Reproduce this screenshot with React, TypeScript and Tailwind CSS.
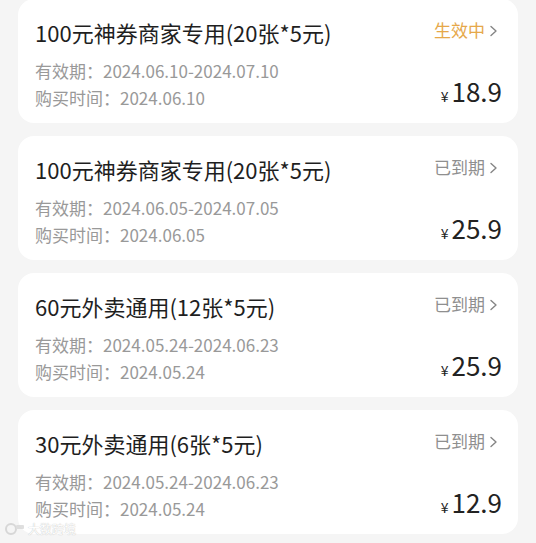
import React from 'react';

interface Coupon {
  id: number;
  title: string;
  status: string;
  active: boolean;
  validity: string;
  bought: string;
  price: string;
}

const coupons: Coupon[] = [
  { id: 1, title: '100元神券商家专用(20张*5元)', status: '生效中', active: true, validity: '2024.06.10-2024.07.10', bought: '2024.06.10', price: '18.9' },
  { id: 2, title: '100元神券商家专用(20张*5元)', status: '已到期', active: false, validity: '2024.06.05-2024.07.05', bought: '2024.06.05', price: '25.9' },
  { id: 3, title: '60元外卖通用(12张*5元)', status: '已到期', active: false, validity: '2024.05.24-2024.06.23', bought: '2024.05.24', price: '25.9' },
  { id: 4, title: '30元外卖通用(6张*5元)', status: '已到期', active: false, validity: '2024.05.24-2024.06.23', bought: '2024.05.24', price: '12.9' },
];

const font = { fontFamily: '"Noto Sans CJK SC", "Noto Sans", sans-serif' };

function CouponCard({ coupon }: { coupon: Coupon }) {
  return (
    <div className="flex h-[124px] w-[500px] shrink-0 rounded-[16px] bg-white pl-[17px] pr-[16px]">
      {/* left: title + dates */}
      <div className="flex flex-1 flex-col pt-[18px]">
        <div className="text-[22px] leading-[30px] text-[#1f1f1f] whitespace-nowrap">{coupon.title}</div>
        <div className="mt-[10px] text-[17px] leading-[27px] text-[#999] whitespace-nowrap">
          <div>有效期：{coupon.validity}</div>
          <div>购买时间：{coupon.bought}</div>
        </div>
      </div>

      {/* right: status + price */}
      <div className="flex flex-col items-end justify-between pt-[19px] pb-[19px]">
        <div className="flex items-center">
          <span className={`text-[17px] leading-[24px] ${coupon.active ? 'text-[#e6a84a]' : 'text-[#8f8f8f]'}`}>
            {coupon.status}
          </span>
          <svg width="12" height="14" viewBox="0 0 12 14" className="mt-[2px] ml-[3px] mr-[2px]">
            <path d="M3 2.5l5 4.5-5 4.5" fill="none" stroke="#858585" strokeWidth="1.4" strokeLinecap="round" strokeLinejoin="round" />
          </svg>
        </div>
        <div className="flex items-baseline text-[#222]">
          <span className="mr-[3px] text-[14px] leading-none">¥</span>
          <span className="text-[26px] leading-none">{coupon.price}</span>
        </div>
      </div>
    </div>
  );
}

export default function App() {
  return (
    <div className="relative h-[543px] w-[536px] overflow-hidden bg-[#f5f5f5]" style={font}>
      <div className="-mt-px flex flex-col items-center gap-[13px]">
        {coupons.map((c) => (
          <CouponCard key={c.id} coupon={c} />
        ))}
      </div>

      {/* watermark */}
      <div className="absolute bottom-[7px] left-[5px] flex items-center gap-[3px] opacity-80">
        <svg width="20" height="14" viewBox="0 0 20 14">
          <circle cx="6" cy="7" r="5" fill="none" stroke="#d0d0d0" strokeWidth="2" />
          <rect x="11" y="3" width="8" height="4" rx="1" fill="#d8d8d8" />
        </svg>
        <span className="text-[12px] leading-none text-white [text-shadow:0_0_1px_#9a9a9a]">大数跨境</span>
      </div>
    </div>
  );
}
